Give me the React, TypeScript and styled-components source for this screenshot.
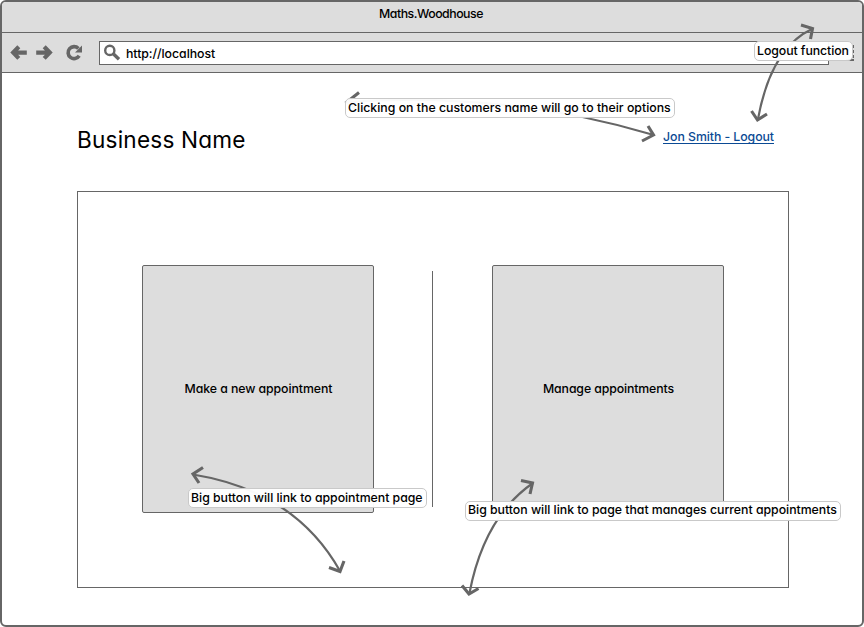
import React from "react";
import styled, { createGlobalStyle } from "styled-components";

const INK = "#666666";
const FILL = "#dddddd";

const GlobalStyle = createGlobalStyle`
  * { box-sizing: border-box; }
  html, body { margin: 0; background: #fff; overflow: hidden; }
  body, button {
    font-family: Inter, "Open Sans", sans-serif;
    font-feature-settings: "cv11";
    font-size: 12.3px;
    font-weight: 500;
    color: #000;
  }
`;

const Window = styled.div`
  position: relative;
  display: flex;
  flex-direction: column;
  width: 864px;
  height: 627px;
  border: 2px solid ${INK};
  border-radius: 6px;
  background: #fff;
  overflow: hidden;
`;

const TitleBar = styled.header`
  height: 31px;
  flex: none;
  padding-right: 2px;
  border-bottom: 1px solid ${INK};
  background: ${FILL};
  text-align: center;
  line-height: 23px;
  letter-spacing: -0.48px;
`;

const Toolbar = styled.nav`
  display: flex;
  align-items: center;
  height: 40px;
  flex: none;
  padding-left: 7px;
  border-bottom: 1px solid ${INK};
  background: ${FILL};
`;

const NavIcons = styled.svg`
  width: 90px;
  height: 24px;
  flex: none;
`;

const AddressBar = styled.div`
  display: flex;
  align-items: center;
  width: 730px;
  height: 24px;
  border: 1px solid ${INK};
  background: #fff;
`;

const Address = styled.span`
  padding-top: 2px;
  letter-spacing: -0.04px;
`;

const SearchIcon = styled.svg`
  width: 26px;
  height: 22px;
  flex: none;
`;

const MenuIcon = styled.svg`
  width: 26px;
  height: 24px;
  flex: none;
`;

const PageHeader = styled.div`
  display: flex;
  justify-content: space-between;
  align-items: flex-start;
  width: 697px;
  height: 118px;
  flex: none;
  margin-left: 75px;
  padding-top: 52px;
`;

const BusinessName = styled.h1`
  margin: 0;
  font-size: 22.6px;
  font-weight: 400;
  line-height: 30px;
  letter-spacing: 0.2px;
`;

const AccountLink = styled.a`
  height: 15px;
  margin-top: 4px;
  border-bottom: 1px solid #0b4a94;
  color: #0b4a94;
  line-height: 16px;
  letter-spacing: -0.06px;
  text-decoration: none;
`;

const Panel = styled.main`
  display: flex;
  align-items: flex-start;
  width: 712px;
  height: 397px;
  flex: none;
  margin-left: 75px;
  padding: 73px 0 0 64px;
  border: 1px solid ${INK};
`;

const BigButton = styled.button<{ $tracking: number }>`
  width: 232px;
  height: 248px;
  padding: 0 0 1px 1px;
  border: 1px solid ${INK};
  border-radius: 2px;
  background: ${FILL};
  letter-spacing: ${(p) => p.$tracking}px;
`;

const Divider = styled.div`
  width: 1px;
  height: 236px;
  margin: 6px 59px 0 58px;
  background: ${INK};
`;

const ArrowLayer = styled.svg`
  position: absolute;
  left: -2px;
  top: -2px;
  width: 864px;
  height: 627px;
  pointer-events: none;
`;

const Note = styled.div<{ $x: number; $y: number; $w: number; $tracking?: number; $line?: number }>`
  position: absolute;
  left: ${(p) => p.$x - 2}px;
  top: ${(p) => p.$y - 2}px;
  width: ${(p) => p.$w}px;
  height: 20px;
  border: 1px solid #c9c9c9;
  border-radius: 5px;
  background: rgba(255, 255, 255, 0.96);
  line-height: ${(p) => p.$line ?? 17}px;
  padding-left: 2px;
  white-space: nowrap;
  letter-spacing: ${(p) => p.$tracking ?? 0}px;
`;

const arrows = [
  { line: "M812 29Q771 48 758 119", heads: ["M801 25L812.5 28.5L810.5 39", "M751.5 111L757.5 120L767 114"] },
  { line: "M347 102Q505 91 652 134.5", heads: ["M359 92.5L347 102L356 109", "M648 126L653.5 135L642 141"] },
  { line: "M193 474.5Q295 491 340 571", heads: ["M203 467.5L193 474L199 483", "M329 567.5L340 571.5L344 561"] },
  { line: "M533 483Q484 517 469.5 593", heads: ["M521 480.5L532.5 483L530 494", "M462 585.5L469 594L478.5 588.5"] },
];

export default function App() {
  return (
    <>
      <GlobalStyle />
      <Window>
        <TitleBar>Maths.Woodhouse</TitleBar>
        <Toolbar>
          <NavIcons viewBox="9 41 90 24" fill="none" stroke={INK}>
            <path d="M18.8 46.8L13.2 52.6L18.8 58.4M14 52.6H26.8" strokeWidth="4.2" />
            <path d="M44.2 46.8L49.8 52.6L44.2 58.4M49 52.6H36.2" strokeWidth="4.2" />
            <path d="M78.4 48.4A6 6 0 1 0 79.2 55.8" strokeWidth="3.6" />
            <path d="M82 45.4V52.4H75Z" fill={INK} stroke="none" />
          </NavIcons>
          <AddressBar>
            <SearchIcon viewBox="100 42 26 22" fill="none" stroke={INK}>
              <circle cx="109.8" cy="50.4" r="4.6" strokeWidth="2.4" />
              <path d="M113.5 54L119 59.2" strokeWidth="3.4" />
            </SearchIcon>
            <Address>http://localhost</Address>
          </AddressBar>
          <MenuIcon viewBox="829 41 26 24" stroke={INK} fill="none">
            <path d="M853.2 45V60" strokeWidth="1.6" strokeDasharray="3 2" />
            <path d="M846 60H854" strokeWidth="2" />
          </MenuIcon>
        </Toolbar>
        <PageHeader>
          <BusinessName>Business Name</BusinessName>
          <AccountLink href="#">Jon Smith - Logout</AccountLink>
        </PageHeader>
        <Panel>
          <BigButton $tracking={-0.07}>Make a new appointment</BigButton>
          <Divider />
          <BigButton $tracking={-0.11}>Manage appointments</BigButton>
        </Panel>

        <ArrowLayer viewBox="0 0 864 627" fill="none" stroke={INK}>
          {arrows.map((a) => (
            <g key={a.line}>
              <path d={a.line} strokeWidth="2.2" />
              {a.heads.map((h) => (
                <path key={h} d={h} strokeWidth="3.1" />
              ))}
            </g>
          ))}
        </ArrowLayer>
        <Note $x={754} $y={41} $w={99} $tracking={-0.07}>Logout function</Note>
        <Note $x={345} $y={98} $w={330} $tracking={0.01}>Clicking on the customers name will go to their options</Note>
        <Note $x={188} $y={488} $w={239} $tracking={-0.02}>Big button will link to appointment page</Note>
        <Note $x={465} $y={501} $w={376} $tracking={-0.015} $line={16}>Big button will link to page that manages current appointments</Note>
      </Window>
    </>
  );
}
